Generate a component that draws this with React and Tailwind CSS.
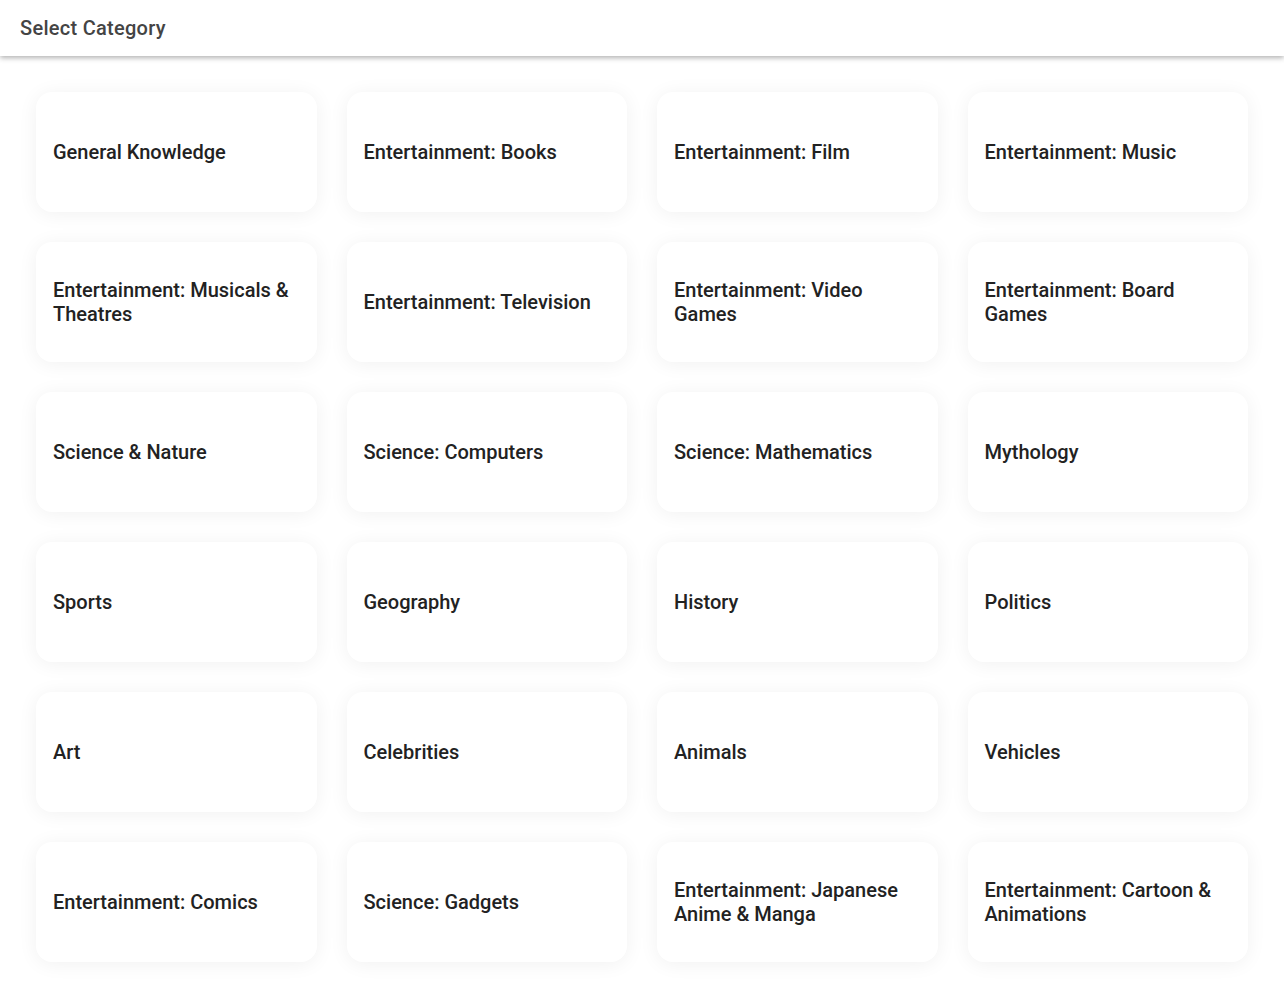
const categories = [
  'General Knowledge',
  'Entertainment: Books',
  'Entertainment: Film',
  'Entertainment: Music',
  'Entertainment: Musicals & Theatres',
  'Entertainment: Television',
  'Entertainment: Video Games',
  'Entertainment: Board Games',
  'Science & Nature',
  'Science: Computers',
  'Science: Mathematics',
  'Mythology',
  'Sports',
  'Geography',
  'History',
  'Politics',
  'Art',
  'Celebrities',
  'Animals',
  'Vehicles',
  'Entertainment: Comics',
  'Science: Gadgets',
  'Entertainment: Japanese Anime & Manga',
  'Entertainment: Cartoon & Animations',
];

export default function App() {
  return (
    <div className="min-h-screen bg-white font-['Roboto',sans-serif]">
      <header className="flex h-14 items-center bg-white px-5 shadow-[0_2px_5px_rgba(0,0,0,0.3)]">
        <h1 className="text-[20px] font-medium tracking-[0.28px] text-[#444444]">Select Category</h1>
      </header>

      <main className="grid grid-cols-4 gap-[30px] px-9 pt-9 pb-5">
        {categories.map((name) => (
          <button
            key={name}
            className="flex h-[120px] items-center rounded-2xl bg-white px-[17px] text-left text-xl leading-6 font-medium text-[#222222] shadow-[0_2px_20px_rgba(0,0,0,0.06)]"
          >
            {name}
          </button>
        ))}
      </main>
    </div>
  );
}
